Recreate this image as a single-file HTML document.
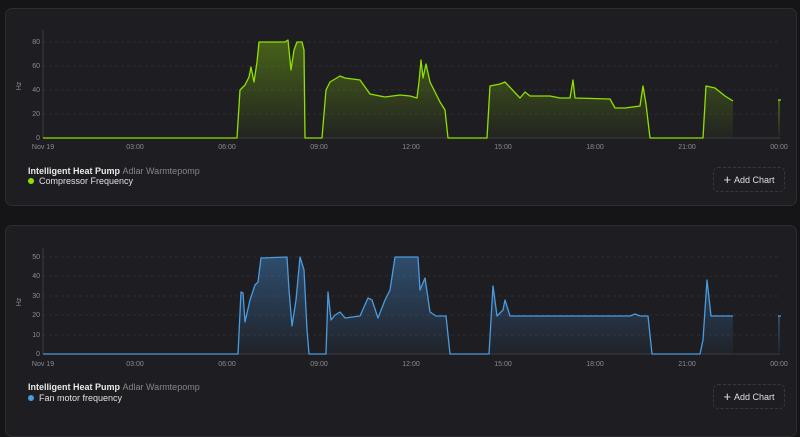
<!DOCTYPE html>
<html><head><meta charset="utf-8"><style>
body{margin:0;width:800px;height:423px;background:#151518;font-family:"Liberation Sans",sans-serif;overflow:hidden;position:relative}
.card{position:absolute;left:5px;width:790px;background:#1e1e22;border:1px solid #2c2c31;border-radius:7px}
svg{position:absolute;left:0;top:0}
.t{position:absolute;left:28px;font-size:9px;color:#e8e8e8;font-weight:bold}
.t span{color:#85858a;font-weight:normal}
.l{position:absolute;left:28px;font-size:9px;color:#e0e0e0}
.l i{display:inline-block;width:6px;height:6px;border-radius:50%;margin-right:5px;vertical-align:0}
.b{position:absolute;left:713px;width:70px;height:23px;border:1px dashed #38383e;border-radius:5px;color:#e0e0e0;font-size:9px;line-height:23px;text-align:center}
.b b{font-weight:normal;font-size:13px;vertical-align:-1px;margin-right:3px}
</style></head><body>
<div class="card" style="top:8px;height:196px"></div>
<div class="card" style="top:225px;height:210px"></div>
<svg width="800" height="423" font-family="Liberation Sans" font-size="7" fill="#8a8a90">
<defs>
<linearGradient id="g1" x1="0" y1="0" x2="0" y2="1"><stop offset="0" stop-color="#6a9a10" stop-opacity=".55"/><stop offset="1" stop-color="#6a9a10" stop-opacity=".05"/></linearGradient>
<linearGradient id="g2" x1="0" y1="0" x2="0" y2="1"><stop offset="0" stop-color="#3f7cb8" stop-opacity=".5"/><stop offset="1" stop-color="#3f7cb8" stop-opacity=".05"/></linearGradient>
</defs>
<g stroke="#35353a" stroke-width="0.7" stroke-dasharray="3 3">
<line x1="43" x2="780" y1="114" y2="114"/><line x1="43" x2="780" y1="90" y2="90"/><line x1="43" x2="780" y1="66" y2="66"/><line x1="43" x2="780" y1="42" y2="42"/>
<line x1="43" x2="780" y1="335" y2="335"/><line x1="43" x2="780" y1="315" y2="315"/><line x1="43" x2="780" y1="296" y2="296"/><line x1="43" x2="780" y1="276" y2="276"/><line x1="43" x2="780" y1="257" y2="257"/>
</g>
<g stroke="#3a3a40" stroke-width="1"><line x1="43" x2="43" y1="30" y2="138"/><line x1="43" x2="780" y1="138" y2="138"/><line x1="43" x2="43" y1="248" y2="354"/><line x1="43" x2="780" y1="354" y2="354"/></g>
<g text-anchor="end"><text x="40" y="140">0</text><text x="40" y="116">20</text><text x="40" y="92">40</text><text x="40" y="68">60</text><text x="40" y="44">80</text>
<text x="40" y="356">0</text><text x="40" y="337">10</text><text x="40" y="317">20</text><text x="40" y="298">30</text><text x="40" y="278">40</text><text x="40" y="259">50</text></g>
<text transform="translate(21,86) rotate(-90)" text-anchor="middle">Hz</text>
<text transform="translate(21,302) rotate(-90)" text-anchor="middle">Hz</text>
<g text-anchor="middle"><text x="43" y="149">Nov 19</text><text x="135" y="149">03:00</text><text x="227" y="149">06:00</text><text x="319" y="149">09:00</text><text x="411" y="149">12:00</text><text x="503" y="149">15:00</text><text x="595" y="149">18:00</text><text x="687" y="149">21:00</text><text x="779" y="149">00:00</text>
<text x="43" y="366">Nov 19</text><text x="135" y="366">03:00</text><text x="227" y="366">06:00</text><text x="319" y="366">09:00</text><text x="411" y="366">12:00</text><text x="503" y="366">15:00</text><text x="595" y="366">18:00</text><text x="687" y="366">21:00</text><text x="779" y="366">00:00</text></g>
<path d="M43,138 L237,138 L240,90 245,85 249,77 251,67 254,82 257,62 259,42 285,42 288,40 291,70 294,50 297,42 302,42 304,50 305,138 322,138 326,90 330,82 340,76 345,78 360,80 370,94 385,97 400,95 410,96 417,98 419,82 421,60 423,78 426,64 430,82 440,102 445,110 448,138 487,138 490,86 500,84 505,82 520,98 525,92 530,96 550,96 560,98 570,98 573,80 575,98 610,99 615,108 625,108 640,106 643,86 646,104 650,138 703,138 706,86 715,88 725,96 733,101 L733,138Z" fill="url(#g1)"/>
<path d="M43,138 L237,138 L240,90 245,85 249,77 251,67 254,82 257,62 259,42 285,42 288,40 291,70 294,50 297,42 302,42 304,50 305,138 322,138 326,90 330,82 340,76 345,78 360,80 370,94 385,97 400,95 410,96 417,98 419,82 421,60 423,78 426,64 430,82 440,102 445,110 448,138 487,138 490,86 500,84 505,82 520,98 525,92 530,96 550,96 560,98 570,98 573,80 575,98 610,99 615,108 625,108 640,106 643,86 646,104 650,138 703,138 706,86 715,88 725,96 733,101" fill="none" stroke="#8fe000" stroke-width="1.3" stroke-linejoin="round"/>
<rect x="778" y="100" width="2" height="38" fill="url(#g1)"/><line x1="778" x2="781" y1="100" y2="100" stroke="#8fe000" stroke-width="1.3"/>
<path d="M43,354 L238,354 241,292 243,293 245,322 250,300 255,285 258,282 261,258 287,257 289,290 292,326 296,300 300,257 304,270 307,330 309,354 326,354 328,292 331,320 335,315 340,312 345,318 360,316 368,298 372,300 378,318 385,300 390,290 395,257 418,257 420,290 425,278 430,312 436,316 446,316 450,354 489,354 493,286 497,316 503,310 505,300 510,316 630,316 635,314 640,316 648,316 652,354 700,354 703,340 707,280 711,316 733,316 L733,354Z" fill="url(#g2)"/>
<path d="M43,354 L238,354 241,292 243,293 245,322 250,300 255,285 258,282 261,258 287,257 289,290 292,326 296,300 300,257 304,270 307,330 309,354 326,354 328,292 331,320 335,315 340,312 345,318 360,316 368,298 372,300 378,318 385,300 390,290 395,257 418,257 420,290 425,278 430,312 436,316 446,316 450,354 489,354 493,286 497,316 503,310 505,300 510,316 630,316 635,314 640,316 648,316 652,354 700,354 703,340 707,280 711,316 733,316" fill="none" stroke="#4a9be0" stroke-width="1.3" stroke-linejoin="round"/>
<rect x="778" y="316" width="2" height="38" fill="url(#g2)"/><line x1="778" x2="781" y1="316" y2="316" stroke="#4a9be0" stroke-width="1.3"/>
</svg>
<div class="t" style="top:166px">Intelligent Heat Pump <span>Adlar Warmtepomp</span></div>
<div class="l" style="top:176px"><i style="background:#8fe000"></i>Compressor Frequency</div>
<div class="b" style="top:167px"><b>+</b>Add Chart</div>
<div class="t" style="top:382px">Intelligent Heat Pump <span>Adlar Warmtepomp</span></div>
<div class="l" style="top:393px"><i style="background:#4a9be0"></i>Fan motor frequency</div>
<div class="b" style="top:384px"><b>+</b>Add Chart</div>
</body></html>
